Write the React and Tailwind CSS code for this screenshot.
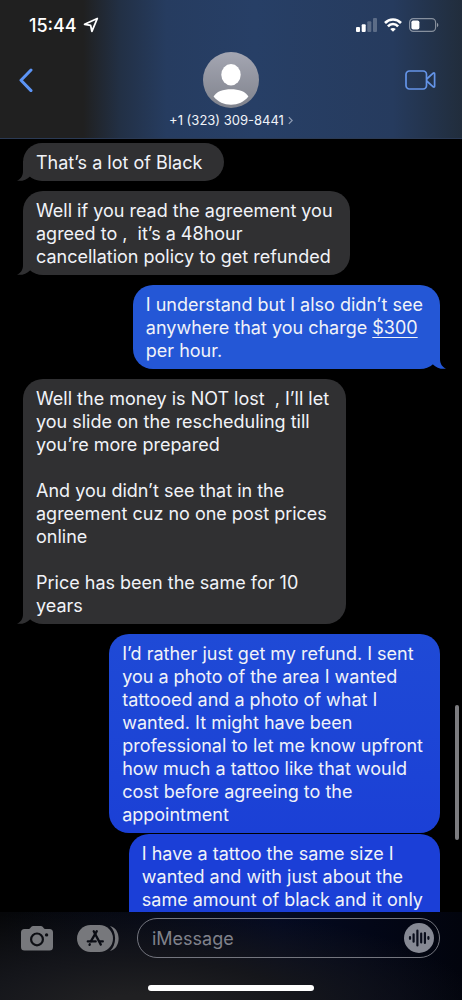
import React, { useState } from 'react';

const messages = [
  { id: 1, from: 'them', tail: true, lines: ['That’s a lot of Black'] },
  {
    id: 2,
    from: 'them',
    tail: true,
    lines: [
      'Well if you read the agreement you',
      'agreed to ,  it’s a 48hour',
      'cancellation policy to get refunded',
    ],
  },
  {
    id: 3,
    from: 'me',
    tail: true,
    color: 'bg-[#2457d6] text-[#2457d6]',
    lines: [
      'I understand but I also didn’t see',
      <>
        anywhere that you charge{' '}
        <a href="#amount" className="underline decoration-1 underline-offset-3">
          $300
        </a>
      </>,
      'per hour.',
    ],
  },
  {
    id: 4,
    from: 'them',
    tail: true,
    lines: [
      'Well the money is NOT lost  , I’ll let',
      'you slide on the rescheduling till',
      'you’re more prepared',
      '',
      'And you didn’t see that in the',
      'agreement cuz no one post prices',
      'online',
      '',
      'Price has been the same for 10',
      'years',
    ],
  },
  {
    id: 5,
    from: 'me',
    color: 'bg-linear-to-b from-[#1f4ad6] to-[#1b40d6]',
    lines: [
      'I’d rather just get my refund. I sent',
      'you a photo of the area I wanted',
      'tattooed and a photo of what I',
      'wanted. It might have been',
      'professional to let me know upfront',
      'how much a tattoo like that would',
      'cost before agreeing to the',
      'appointment',
    ],
  },
  {
    id: 6,
    from: 'me',
    open: true,
    color: 'bg-[#1b3fd7]',
    lines: [
      'I have a tattoo the same size I',
      'wanted and with just about the',
      'same amount of black and it only',
    ],
  },
];

const Tail = ({ mine }) => (
  <svg
    viewBox="0 0 16 20"
    fill="currentColor"
    aria-hidden="true"
    className={`absolute bottom-0 h-5 w-4 ${mine ? '-right-[6px] -scale-x-100' : '-left-[6px]'}`}
  >
    <path d="M6 0 V10 C6 14.5 4 18 0 19.7 C5 20.4 10 18.6 13 15.4 L16 12 V0 Z" />
  </svg>
);

const Bubble = ({ message }) => {
  const mine = message.from === 'me';
  const single = message.lines.length === 1;
  return (
    <div
      className={`relative w-fit pt-2 pl-[13px] ${single ? 'pr-[22px]' : 'pr-[17px]'} ${
        mine ? `self-end ${message.color}` : 'self-start bg-[#303032] text-[#303032]'
      } ${message.open ? 'rounded-t-[20px] pb-10' : 'rounded-[20px] pb-[7px]'}`}
    >
      {message.tail && <Tail mine={mine} />}
      <p className="relative whitespace-pre text-[18px] leading-[23px] text-[#f1f3f8]">
        {message.lines.map((line, i) => (
          <span key={i} className="block min-h-[23px]">
            {line}
          </span>
        ))}
      </p>
    </div>
  );
};

const StatusBar = () => (
  <div className="flex h-[50px] items-center justify-between pl-[29px] pr-[23px]">
    <div className="flex items-center gap-1.5 text-[18px] font-medium text-white">
      <span>15:44</span>
      <svg viewBox="0 0 16 16" className="h-4 w-4" fill="none" stroke="currentColor" strokeWidth="1.8" strokeLinejoin="round">
        <path d="M14.3 1.5 L1.6 7.3 L7.6 8.4 L8.9 14.3 Z" />
      </svg>
    </div>
    <div className="flex items-center gap-[7px] text-white">
      <svg viewBox="0 0 21 14" className="h-[14px] w-[21px]" fill="currentColor">
        <rect x="0" y="9" width="4" height="5" rx="1" />
        <rect x="5.7" y="6.3" width="4" height="7.7" rx="1" />
        <rect x="11.3" y="3.3" width="4" height="10.7" rx="1" opacity=".25" />
        <rect x="17" y="0" width="4" height="14" rx="1" opacity=".25" />
      </svg>
      <svg viewBox="0 0 18 14" className="h-[14px] w-[18px]" fill="none" stroke="currentColor" strokeWidth="2.6">
        <path d="M1 5 C5.4 .4 12.6 .4 17 5" />
        <path d="M3.9 8.3 C6.7 5.3 11.3 5.3 14.1 8.3" />
        <path d="M9 13.8 L6.2 11 C7.8 9.5 10.2 9.5 11.8 11 Z" fill="currentColor" stroke="none" />
      </svg>
      <svg viewBox="0 0 30 14" className="h-[14px] w-[30px]" fill="none">
        <rect x=".6" y=".6" width="26" height="12.8" rx="3.8" stroke="#fff" strokeOpacity=".45" strokeWidth="1.2" />
        <rect x="2.4" y="2.4" width="8" height="9.2" rx="1.8" fill="#fff" />
        <path d="M28 4.8 C29.8 5.5 29.8 8.5 28 9.2 Z" fill="#fff" fillOpacity=".5" />
      </svg>
    </div>
  </div>
);

const ChatHeader = () => (
  <header className="shrink-0 border-b border-[#2b3a54] bg-[linear-gradient(to_right,#202020_18%,#223045_26%,#263c60_36%,#273f66_55%,#263b5e_85%,#212d3c_100%)]">
    <StatusBar />
    <div className="grid grid-cols-[1fr_auto_1fr] pt-[2px] pb-[9px]">
      <button type="button" aria-label="Back" className="ml-[18px] mt-[16px] h-6 w-4 self-start text-[#5c94f5]">
        <svg viewBox="0 0 16 24" className="h-6 w-4" fill="none" stroke="currentColor" strokeWidth="3" strokeLinecap="round" strokeLinejoin="round">
          <path d="M13 2 L3 12.3 L13 22.6" />
        </svg>
      </button>
      <div className="flex flex-col items-center gap-1">
        <svg viewBox="0 0 56 56" className="h-14 w-14" aria-hidden="true">
          <defs>
            <linearGradient id="avatarFill" x1="0" y1="0" x2="0" y2="1">
              <stop offset="0" stopColor="#a4a6b2" />
              <stop offset="1" stopColor="#80838d" />
            </linearGradient>
          </defs>
          <circle cx="28" cy="28" r="28" fill="url(#avatarFill)" />
          <g fill="#fff">
            <ellipse cx="28" cy="22.7" rx="9.7" ry="10.7" />
            <path d="M10.6 44.6 C15 34.8 41 34.8 45.4 44.6 C41 50 35 52.8 28 52.8 C21 52.8 15 50 10.6 44.6 Z" />
          </g>
        </svg>
        <button type="button" className="flex items-center gap-1 text-[13px] leading-[17px] text-[#f0f3f8]">
          +1 (323) 309-8441
          <svg viewBox="0 0 6 10" className="h-[9px] w-[5px] text-[#8d9ab2]" fill="none" stroke="currentColor" strokeWidth="1.5">
            <path d="M1 1 L5 5 L1 9" />
          </svg>
        </button>
      </div>
      <button type="button" aria-label="FaceTime" className="mr-[26px] mt-[18px] h-5 w-[31px] self-start justify-self-end text-[#6494e8]">
        <svg viewBox="0 0 31 20" className="h-5 w-[31px]" fill="none" stroke="currentColor" strokeWidth="1.7" strokeLinejoin="round">
          <rect x="1" y="1" width="20.5" height="18" rx="3.4" />
          <path d="M21.7 9 L28.2 3.2 C29 2.6 29.6 2.9 29.6 3.8 V16.2 C29.6 17.1 29 17.4 28.2 16.8 L21.7 11" />
        </svg>
      </button>
    </div>
  </header>
);

const Composer = () => (
  <footer className="shrink-0 bg-[radial-gradient(ellipse_at_30%_110%,#202022_10%,#15161b_35%,transparent_75%),linear-gradient(to_right,#060709,#040a22_60%,#02040d)] pt-1.5">
    <div className="flex items-center pl-[21px] pr-[22px]">
      <button type="button" aria-label="Camera" className="text-[#77787c]">
        <svg viewBox="0 0 32 26" className="h-[26px] w-8" fill="currentColor" fillRule="evenodd">
          <path d="M3.5 4 H8 C9.5 4 9.8 1 12 1 H20 C22.2 1 22.5 4 24 4 H28.5 Q32 4 32 7.5 V22 Q32 25.5 28.5 25.5 H3.5 Q0 25.5 0 22 V7.5 Q0 4 3.5 4 Z M16 7.4 A7 7 0 1 0 16 21.4 A7 7 0 1 0 16 7.4 Z M16 9.6 A4.8 4.8 0 1 1 16 19.2 A4.8 4.8 0 1 1 16 9.6 Z M25.6 8.2 A1.7 1.7 0 1 0 25.6 11.6 A1.7 1.7 0 1 0 25.6 8.2 Z" />
        </svg>
      </button>
      <button type="button" aria-label="Apps" className="ml-6 text-[#77787c]">
        <svg viewBox="0 0 42 27" className="h-[27px] w-[42px]">
          <rect x="0" y="0" width="36" height="27" rx="13.5" fill="currentColor" />
          <path d="M33 1 C44.5 3.5 44.5 23.5 33 26 C39.8 20.5 39.8 6.5 33 1 Z" fill="currentColor" />
          <g stroke="#0b0d14" strokeWidth="2.3" strokeLinecap="round" fill="none">
            <path d="M16.7 6.2 L23.8 19.6" />
            <path d="M19.8 6.2 L14 16.2" />
            <path d="M10.8 16.4 H18.7" />
            <path d="M22.9 16.4 H25.8" />
            <path d="M12.8 19.3 L12.5 19.8" />
          </g>
        </svg>
      </button>
      <div className="ml-[18px] flex h-10 min-w-0 flex-1 items-center rounded-full border border-[#74767f] pl-[14px] pr-[5px]">
        <input
          type="text"
          aria-label="iMessage"
          placeholder="iMessage"
          className="min-w-0 flex-1 bg-transparent text-[18px] text-white outline-none placeholder:text-[#80828b]"
        />
        <button type="button" aria-label="Record audio" className="text-[#868994]">
          <svg viewBox="0 0 30 30" className="h-[30px] w-[30px]">
            <circle cx="15" cy="15" r="15" fill="currentColor" />
            <path
              d="M6 14.2 V15.8 M9.6 11.3 V18.7 M13.4 7.5 V22.5 M17.2 10.5 V19.5 M20.9 10 V20 M24.4 14.2 V15.8"
              stroke="#0a0e1c"
              strokeWidth="2.2"
              strokeLinecap="round"
            />
          </svg>
        </button>
      </div>
    </div>
    <div className="mx-auto mt-[27px] mb-[9px] h-1.5 w-[36%] rounded-full bg-white" />
  </footer>
);

export default function App() {
  const [thread] = useState(messages);

  return (
    <div className="flex h-screen flex-col bg-black font-[Inter,'Liberation_Sans',sans-serif]">
      <ChatHeader />
      <main className="relative min-h-0 flex-1 overflow-hidden">
        <div className="flex flex-col pt-1 pl-[23px] pr-[22px]">
          {thread.map((message, i) => (
            <div
              key={message.id}
              className={`flex flex-col ${i === 0 ? '' : message.open ? 'mt-px' : 'mt-2.5'}`}
            >
              <Bubble message={message} />
            </div>
          ))}
        </div>
        {/* scroll indicator */}
        <div className="absolute right-[3px] bottom-[72px] h-[135px] w-1 rounded-full bg-[#7c7c80]" />
      </main>
      <Composer />
    </div>
  );
}
